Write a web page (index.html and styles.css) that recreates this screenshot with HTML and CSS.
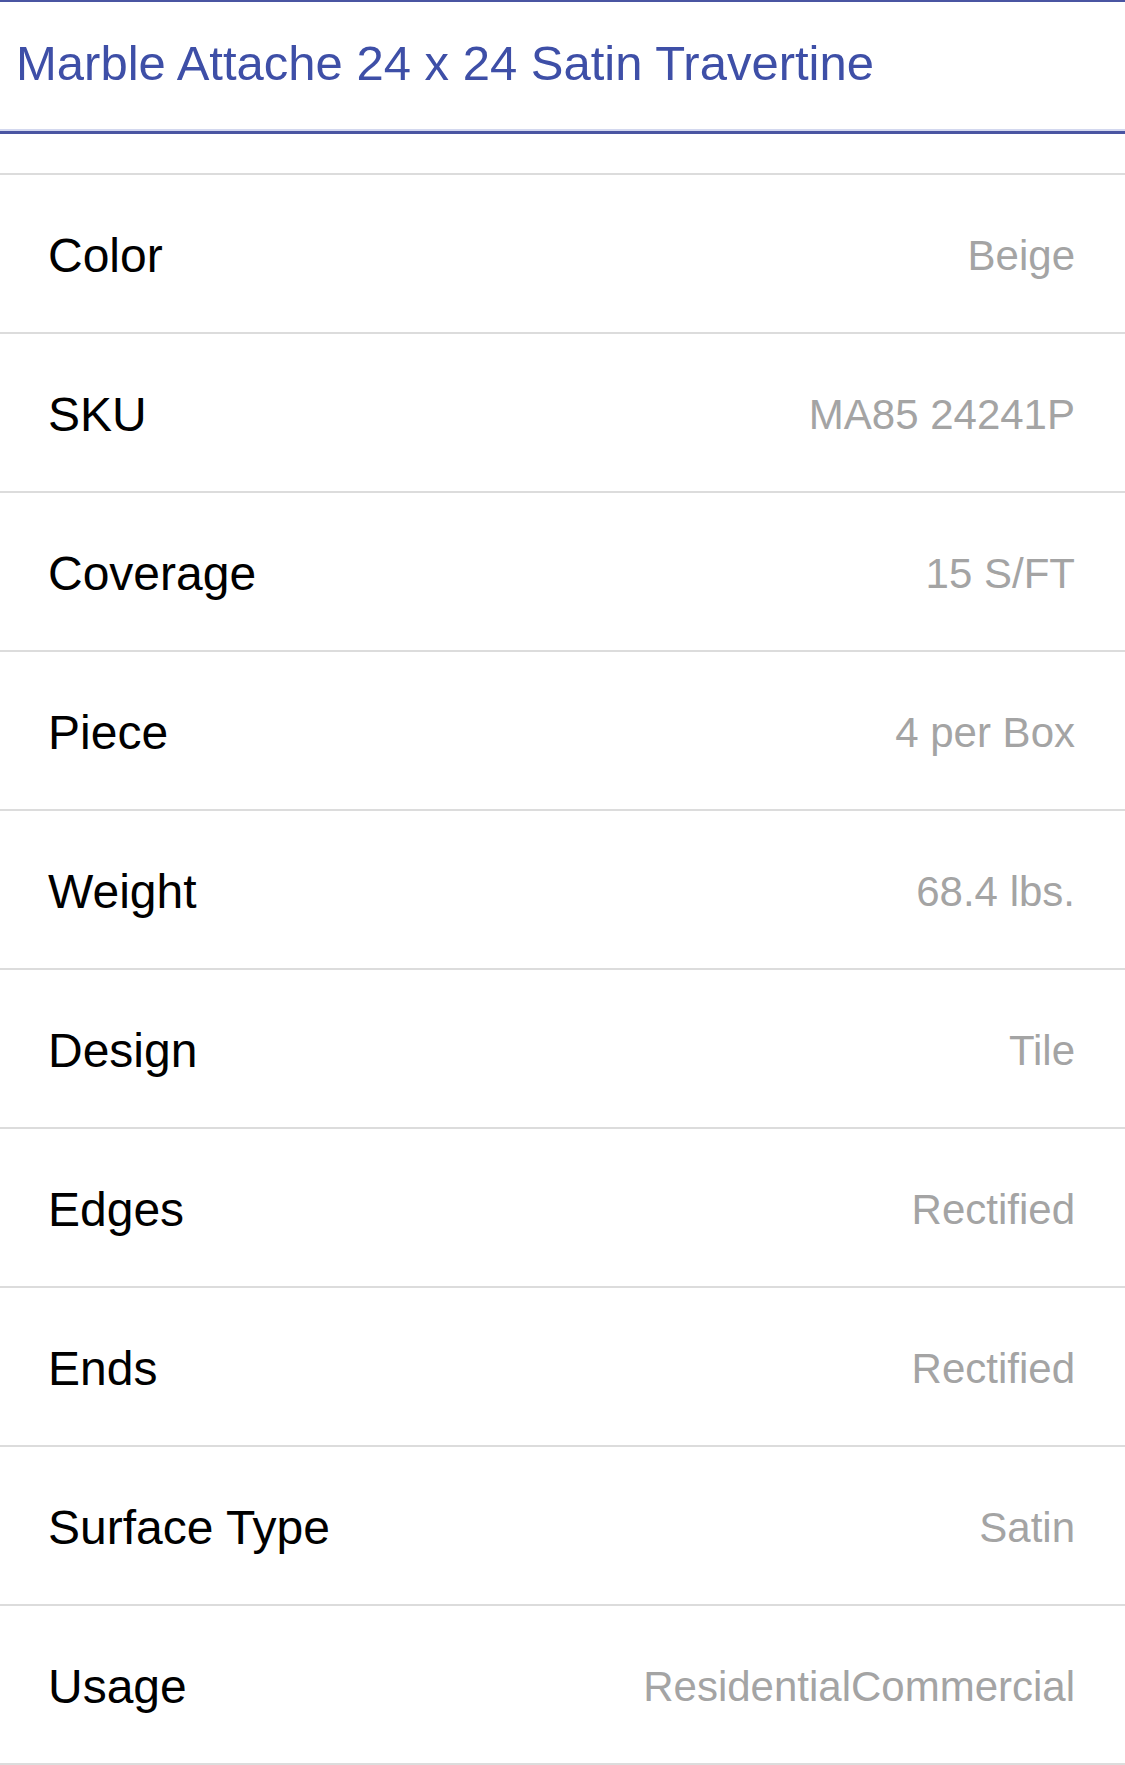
FILE: index.html
```html
<!DOCTYPE html>
<html lang="en">
<head>
  <meta charset="UTF-8" />
  <title>Marble Attache 24 x 24 Satin Travertine</title>
  <link rel="stylesheet" href="styles.css">
</head>
<body>
  <div class="header">
    <h1>Marble Attache 24 x 24 Satin Travertine</h1>
  </div>

  <!-- product specs -->
  <ul class="specs">
    <li><span class="label">Color</span><span class="value">Beige</span></li>
    <li><span class="label">SKU</span><span class="value">MA85 24241P</span></li>
    <li><span class="label">Coverage</span><span class="value">15 S/FT</span></li>
    <li><span class="label">Piece</span><span class="value">4 per Box</span></li>
    <li><span class="label">Weight</span><span class="value">68.4 lbs.</span></li>
    <li><span class="label">Design</span><span class="value">Tile</span></li>
    <li><span class="label">Edges</span><span class="value">Rectified</span></li>
    <li><span class="label">Ends</span><span class="value">Rectified</span></li>
    <li><span class="label">Surface Type</span><span class="value">Satin</span></li>
    <li><span class="label">Usage</span><span class="value">ResidentialCommercial</span></li>
  </ul>
</body>
</html>
```

FILE: styles.css
```css
body {
  font-family: "Liberation Sans", Arial, sans-serif;
  background: white;
  margin: 0;
}
.header {
  height: 134px;
  border-top: 2px solid #4a55a2;
  border-bottom: 3px solid #4a55a2;
  box-shadow: inset 0 -2px 0 #d3d8ef;
  display: flex;
  align-items: center;
  padding: 0 16px 8px;
  box-sizing: border-box;
}
h1 {
  margin: 0;
  font-size: 49px;
  font-weight: normal;
  color: #3e4fa7;
}
.specs {
  list-style: none;
  margin: 39px 0 0;
  padding: 0;
  border-top: 2px solid #dcdcdc;
}
.specs li {
  height: 157px;
  border-bottom: 2px solid #dcdcdc;
  display: flex;
  align-items: center;
  justify-content: space-between;
  padding: 4px 50px 0 48px;
  box-sizing: border-box;
  height: 159px;
}
.label {
  font-size: 48px;
  color: #000;
}
.value {
  font-size: 42px;
  color: #a4a4a4;
}
```
